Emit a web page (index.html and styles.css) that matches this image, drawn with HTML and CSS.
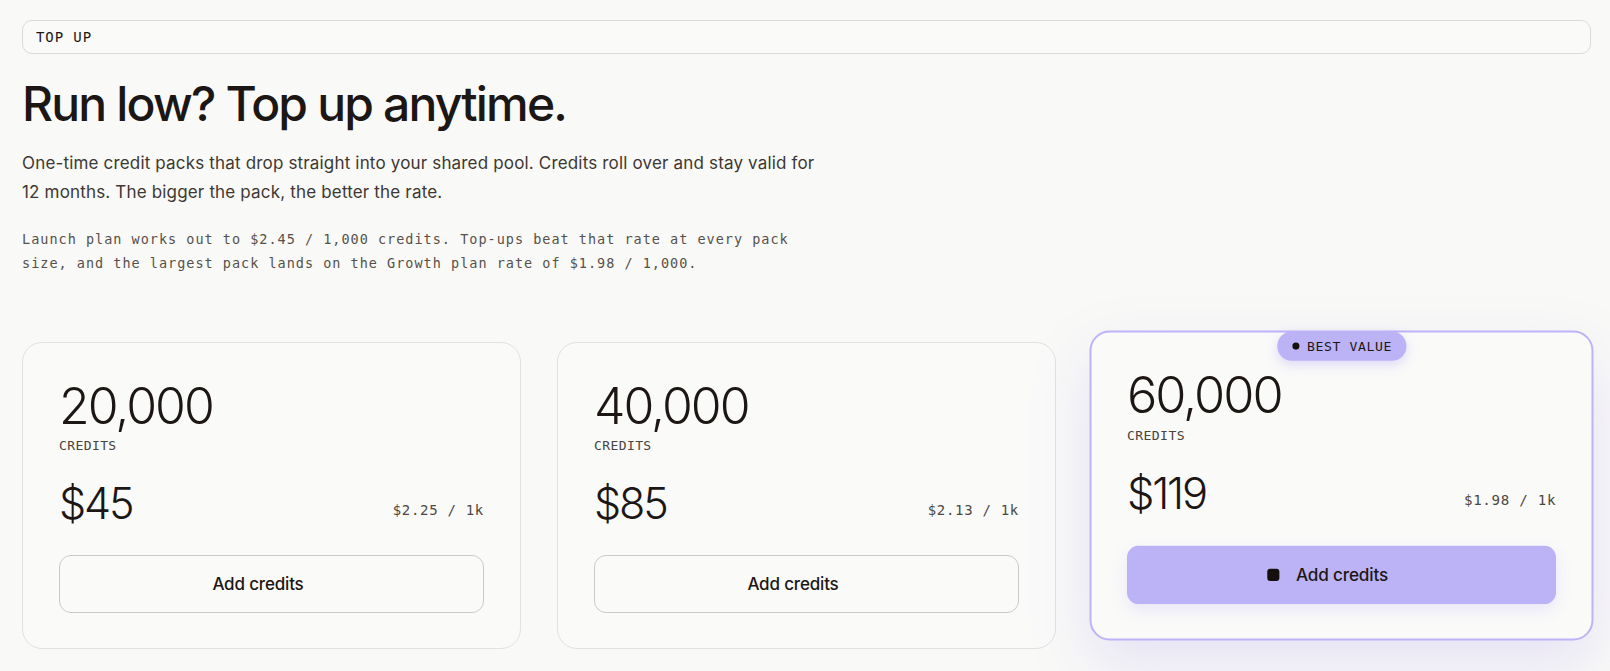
FILE: index.html
```html
<!DOCTYPE html>
<html lang="en">
  <head>
    <meta charset="UTF-8" />
    <meta name="viewport" content="width=device-width, initial-scale=1.0" />
    <title>Top up</title>
    <link rel="stylesheet" href="styles.css">
  </head>
  <body>
    <div class="page">
      <div class="eyebrow">TOP UP</div>

      <h1 class="title">Run low? Top up anytime.</h1>
      <p class="lead">
        One-time credit packs that drop straight into your shared pool. Credits roll over and stay valid for
        12 months. The bigger the pack, the better the rate.
      </p>
      <p class="note">
        Launch plan works out to $2.45 / 1,000 credits. Top-ups beat that rate at every pack
        size, and the largest pack lands on the Growth plan rate of $1.98 / 1,000.
      </p>

      <div class="packs">
        <div class="pack">
          <div class="amount">20,000</div>
          <div class="unit">CREDITS</div>
          <div class="price-row">
            <span class="price">$45</span>
            <span class="rate">$2.25 / 1k</span>
          </div>
          <button class="add-btn">Add credits<svg class="arrow" viewBox="0 0 11 11"><path d="M1 5.5h9M6 1.5l4 4-4 4" fill="none" stroke="currentColor" stroke-width="1.5"/></svg></button>
        </div>

        <div class="pack">
          <div class="amount">40,000</div>
          <div class="unit">CREDITS</div>
          <div class="price-row">
            <span class="price">$85</span>
            <span class="rate">$2.13 / 1k</span>
          </div>
          <button class="add-btn">Add credits<svg class="arrow" viewBox="0 0 11 11"><path d="M1 5.5h9M6 1.5l4 4-4 4" fill="none" stroke="currentColor" stroke-width="1.5"/></svg></button>
        </div>

        <!-- bester Preis: hervorgehoben -->
        <div class="pack pack-best">
          <span class="badge"><span class="dot"></span>BEST VALUE</span>
          <div class="amount">60,000</div>
          <div class="unit">CREDITS</div>
          <div class="price-row">
            <span class="price">$119</span>
            <span class="rate">$1.98 / 1k</span>
          </div>
          <button class="add-btn add-btn-primary"><span class="square"></span>Add credits<svg class="arrow" viewBox="0 0 11 11"><path d="M1 5.5h9M6 1.5l4 4-4 4" fill="none" stroke="currentColor" stroke-width="1.5"/></svg></button>
        </div>
      </div>
    </div>
  </body>
</html>
```

FILE: styles.css
```css
body {
  margin: 0;
  background-color: #f9f9f7;
  font-family: Inter, "Noto Sans", sans-serif;
  color: #1c1714;
}

.page {
  padding: 20px 19px 40px 22px;
}

.eyebrow {
  height: 32px;
  line-height: 32px;
  padding: 0 13px;
  border: 1px solid #dcdad6;
  border-radius: 10px;
  background: #fafaf8;
  font-family: "DejaVu Sans Mono", monospace;
  font-size: 14px;
  letter-spacing: 0.9px;
  color: #1c1714;
}

.title {
  margin: 24px 0 0;
  font-size: 48px;
  line-height: 1.1;
  font-weight: 500;
  letter-spacing: -0.038em;
}

.lead {
  margin: 18px 0 0;
  max-width: 800px;
  font-size: 17px;
  line-height: 29px;
  letter-spacing: 0.01em;
  color: #3d3833;
}

.note {
  margin: 20px 0 0;
  max-width: 800px;
  font-family: "DejaVu Sans Mono", monospace;
  font-size: 13.5px;
  line-height: 24px;
  letter-spacing: 1px;
  color: #57514b;
}

.packs {
  display: grid;
  grid-template-columns: 1fr 1fr 1fr;
  gap: 36px;
  margin-top: 67px;
}

.pack {
  position: relative;
  padding: 38px 36px 35px;
  border: 1px solid #e3e1dd;
  border-radius: 20px;
  background: #fafaf9;
}

.pack-best {
  padding: 37px 35px 34px;
  border: 2px solid #bdb3f7;
  transform: translateY(-10px) scale(1.01);
  box-shadow: 0 24px 60px rgba(150, 130, 240, 0.18);
}

.badge {
  position: absolute;
  top: -1px;
  left: 50%;
  transform: translateX(-50%);
  display: flex;
  align-items: center;
  gap: 8px;
  height: 29px;
  padding: 0 14px 0 15px;
  border-radius: 15px;
  background: #bcb3f6;
  font-family: "DejaVu Sans Mono", monospace;
  font-size: 13px;
  letter-spacing: 0.6px;
  white-space: nowrap;
  box-shadow: 0 4px 12px rgba(140, 120, 240, 0.25);
}

.dot {
  width: 7px;
  height: 7px;
  border-radius: 50%;
  background: #15100d;
}

.amount {
  font-size: 50px;
  line-height: 1;
  font-weight: 300;
  letter-spacing: -0.04em;
  font-feature-settings: "pnum";
}

.price {
  font-size: 43px;
  line-height: 1;
  font-weight: 300;
  letter-spacing: -0.05em;
  font-feature-settings: "pnum";
}

.unit {
  margin-top: 6px;
  font-family: "DejaVu Sans Mono", monospace;
  font-size: 13px;
  line-height: 17px;
  letter-spacing: 0.4px;
  color: #48433e;
}

.price-row {
  display: flex;
  justify-content: space-between;
  align-items: flex-end;
  margin-top: 28px;
}

.rate {
  padding-bottom: 7px;
  font-family: "DejaVu Sans Mono", monospace;
  font-size: 14px;
  letter-spacing: 0.7px;
  color: #4d4843;
}

.add-btn {
  display: flex;
  align-items: center;
  justify-content: center;
  gap: 16px;
  width: 100%;
  height: 58px;
  margin-top: 30px;
  border: 1px solid #cbc9c5;
  border-radius: 12px;
  background: transparent;
  font-family: Inter, "Noto Sans", sans-serif;
  font-size: 17px;
  font-weight: 500;
  letter-spacing: -0.01em;
  color: #1c1714;
  cursor: pointer;
}

/* Pfeil erscheint erst beim Hover */
.arrow {
  width: 11px;
  height: 11px;
  opacity: 0;
}

.add-btn:hover .arrow {
  opacity: 1;
}

.add-btn-primary {
  border-color: transparent;
  background: #bcb3f6;
  box-shadow: 0 6px 16px rgba(140, 120, 240, 0.15);
}

.square {
  width: 12px;
  height: 12px;
  border-radius: 3px;
  background: #15100d;
}
```
